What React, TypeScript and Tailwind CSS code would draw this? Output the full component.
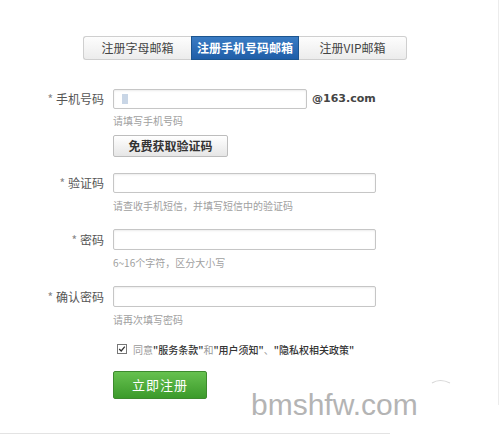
const TABS = ["注册字母邮箱", "注册手机号码邮箱", "注册VIP邮箱"];

const CJK = "font-['Noto_Sans_CJK_SC','Noto_Sans',sans-serif]";

function Tabs({ active }: { active: number }) {
  return (
    <div className="ml-[83px] flex w-[324px] h-[24px]">
      {TABS.map((tab, i) =>
        i === active ? (
          <div
            key={tab}
            className="w-[108px] flex items-center justify-center bg-gradient-to-b from-[#3a7cc4] to-[#1f5ea8] border border-[#1c558f] text-white text-[12px] font-bold"
          >
            {tab}
          </div>
        ) : (
          <div
            key={tab}
            className={`w-[108px] flex items-center justify-center bg-gradient-to-b from-[#fdfdfd] to-[#ececec] border border-[#cfcfcf] text-[#444] text-[12px] ${
              i === 0 ? "rounded-l-[3px] border-r-0" : "rounded-r-[3px] border-l-0"
            }`}
          >
            {tab}
          </div>
        )
      )}
    </div>
  );
}

function Field({
  label,
  width,
  height,
  cursor,
  suffix,
}: {
  label: string;
  width: string;
  height: string;
  cursor?: boolean;
  suffix?: string;
}) {
  return (
    <div className="flex items-center">
      <label className="w-[104px] text-right text-[12px] text-[#555] leading-none">
        <span className="text-[#888] mr-[3px]">*</span>
        {label}
      </label>
      <div
        className={`ml-[9px] ${width} ${height} border border-[#c6c6c6] rounded-[2px] bg-white shadow-[inset_0_1px_2px_rgba(0,0,0,0.08)] flex items-center`}
      >
        {cursor && <span className="ml-[8px] w-[6px] h-[10px] bg-[#c9d6e6]" />}
      </div>
      {suffix && (
        <span className="ml-[5px] text-[11px] font-bold text-[#444] font-['DejaVu_Sans',sans-serif]">
          {suffix}
        </span>
      )}
    </div>
  );
}

function Hint({ text, className }: { text: string; className: string }) {
  return (
    <div className={`ml-[113px] text-[10px] leading-[14px] text-[#a0a0a0] ${className}`}>
      {text}
    </div>
  );
}

export default function App() {
  return (
    <div className={`relative w-[500px] h-[437px] bg-white overflow-hidden ${CJK}`}>
      <div className="w-[499px] h-[405px] border-r border-[#ececec] pt-[36px]">
        <Tabs active={1} />

        <div className="mt-[29px]">
          <Field label="手机号码" width="w-[194px]" height="h-[20px]" cursor suffix="@163.com" />
        </div>
        <Hint text="请填写手机号码" className="mt-[5px]" />
        <button className="ml-[113px] mt-[7px] w-[115px] h-[22px] border border-[#bdbdbd] rounded-[2px] bg-gradient-to-b from-white to-[#e6e6e6] text-[12px] font-bold text-[#333]">
          免费获取验证码
        </button>

        <div className="mt-[16px]">
          <Field label="验证码" width="w-[263px]" height="h-[20px]" />
        </div>
        <Hint text="请查收手机短信，并填写短信中的验证码" className="mt-[6px]" />

        <div className="mt-[16px]">
          <Field label="密码" width="w-[263px]" height="h-[21px]" />
        </div>
        <Hint text="6~16个字符，区分大小写" className="mt-[6px]" />

        <div className="mt-[16px]">
          <Field label="确认密码" width="w-[263px]" height="h-[21px]" />
        </div>
        <Hint text="请再次填写密码" className="mt-[6px]" />

        <div className="mt-[15px] ml-[117px] flex items-center h-[14px] text-[10px]">
          <span className="w-[10px] h-[10px] border border-[#777] bg-white flex items-center justify-center">
            <svg viewBox="0 0 10 10" className="w-[8px] h-[8px]">
              <path d="M1.5 5 L4 7.5 L8.5 2" fill="none" stroke="#333" strokeWidth="1.6" />
            </svg>
          </span>
          <span className="ml-[6px] text-[#999]">同意</span>
          <span className="text-[#333] font-medium">"服务条款"</span>
          <span className="text-[#999]">和</span>
          <span className="text-[#333] font-medium">"用户须知"</span>
          <span className="text-[#999]">、</span>
          <span className="text-[#333] font-medium">"隐私权相关政策"</span>
        </div>

        <button className="ml-[113px] mt-[15px] w-[94px] h-[28px] rounded-[2px] border border-[#3d8a2e] bg-gradient-to-b from-[#66c14f] to-[#3b9a2a] text-white text-[13px] tracking-[1px]">
          立即注册
        </button>
      </div>

      <div className="mt-[28px] w-[390px] h-px bg-[#e3e3e3]" />

      {/* site watermark */}
      <span className="absolute left-[251px] top-[390px] text-[30px] text-[#b4b4b4] font-['Liberation_Sans',Arial,sans-serif] leading-none">
        bmshfw.com
      </span>
      <svg className="absolute left-[430px] top-[378px]" width="24" height="14" viewBox="0 0 24 14">
        <path d="M2 5 Q10 0 20 5" fill="none" stroke="#d8d8d8" strokeWidth="1.2" />
      </svg>
    </div>
  );
}
